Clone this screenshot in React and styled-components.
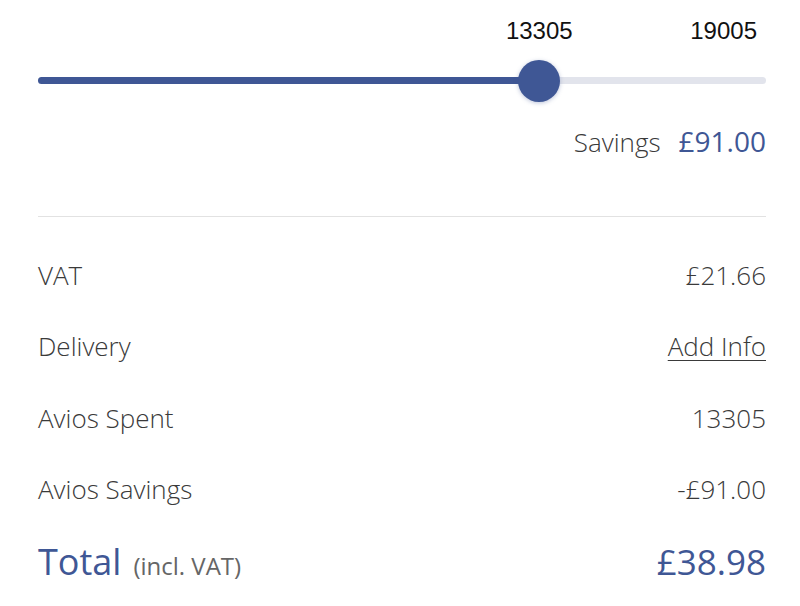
import React from "react";
import styled, { createGlobalStyle } from "styled-components";

const GlobalStyle = createGlobalStyle`
  body {
    margin: 0;
    background: #fff;
    font-family: "Open Sans", "Liberation Sans", sans-serif;
  }
`;

const BLUE = "#3f5795";

const Summary = styled.div`
  width: 800px;
  box-sizing: border-box;
  padding: 16px 34px 0 38px;
`;

const SliderBlock = styled.div`
  display: flex;
  flex-direction: column;
`;

const Labels = styled.div`
  position: relative;
  height: 30px;
  font-family: "Liberation Sans", Arial, sans-serif;
  font-size: 24px;
  color: #111;
`;

const ValueLabel = styled.span`
  position: absolute;
  top: 0;
  line-height: 30px;
  transform: translateX(-50%);
`;

const MaxLabel = styled.span`
  position: absolute;
  top: 0;
  right: 9px;
  line-height: 30px;
`;

const Track = styled.div`
  position: relative;
  margin-top: 31px;
  height: 7px;
  border-radius: 4px;
  background: #e2e4ec;
`;

const Fill = styled.div`
  height: 100%;
  border-radius: 4px;
  background: ${BLUE};
`;

const Thumb = styled.div`
  position: absolute;
  top: 50%;
  width: 42px;
  height: 42px;
  border-radius: 50%;
  background: ${BLUE};
  box-shadow: 0 1px 4px rgba(63, 87, 149, 0.35);
  transform: translate(-50%, -50%);
`;

const SavingsRow = styled.div`
  display: flex;
  justify-content: flex-end;
  align-items: baseline;
  gap: 18px;
  margin-top: 38px;
`;

const SavingsLabel = styled.span`
  font-size: 26px;
  font-weight: 300;
  color: #3a3a3a;
`;

const SavingsValue = styled.span`
  font-size: 28px;
  font-weight: 400;
  color: ${BLUE};
`;

const Divider = styled.hr`
  margin: 56px 0 0;
  border: none;
  border-top: 1px solid #e2e2e2;
`;

const Rows = styled.div`
  display: flex;
  flex-direction: column;
  margin-top: 22px;
`;

const Row = styled.div`
  display: flex;
  justify-content: space-between;
  align-items: center;
  height: 71.5px;
  font-size: 26px;
  font-weight: 300;
  color: #3a3a3a;
`;

const LinkText = styled.a`
  color: #3a3a3a;
  text-decoration: underline;
  text-underline-offset: 4px;
  text-decoration-thickness: 1px;
  cursor: pointer;
`;

const TotalRow = styled.div`
  display: flex;
  justify-content: space-between;
  align-items: baseline;
  margin-top: 12px;
  color: ${BLUE};
`;

const TotalLabel = styled.span`
  font-size: 36px;
  font-weight: 400;
`;

const Note = styled.span`
  margin-left: 12px;
  font-size: 24px;
  font-weight: 400;
  color: #666;
`;

const TotalValue = styled.span`
  font-size: 35px;
  font-weight: 400;
`;

const min = 0;
const max = 19005;
const value = 13305;
const THUMB_R = 21;

export default function App() {
  const ratio = (value - min) / (max - min);
  const pos = `calc(${THUMB_R}px + ${ratio} * (100% - ${THUMB_R * 2}px))`;

  return (
    <>
      <GlobalStyle />
      <Summary>
        <SliderBlock>
          <Labels>
            <ValueLabel style={{ left: pos }}>{value}</ValueLabel>
            <MaxLabel>{max}</MaxLabel>
          </Labels>
          <Track>
            <Fill style={{ width: pos }} />
            <Thumb style={{ left: pos }} />
          </Track>
        </SliderBlock>

        <SavingsRow>
          <SavingsLabel>Savings</SavingsLabel>
          <SavingsValue>£91.00</SavingsValue>
        </SavingsRow>

        <Divider />

        <Rows>
          <Row>
            <span>VAT</span>
            <span>£21.66</span>
          </Row>
          <Row>
            <span>Delivery</span>
            <LinkText>Add Info</LinkText>
          </Row>
          <Row>
            <span>Avios Spent</span>
            <span>13305</span>
          </Row>
          <Row>
            <span>Avios Savings</span>
            <span>-£91.00</span>
          </Row>
        </Rows>

        <TotalRow>
          <div>
            <TotalLabel>Total</TotalLabel>
            <Note>(incl. VAT)</Note>
          </div>
          <TotalValue>£38.98</TotalValue>
        </TotalRow>
      </Summary>
    </>
  );
}
